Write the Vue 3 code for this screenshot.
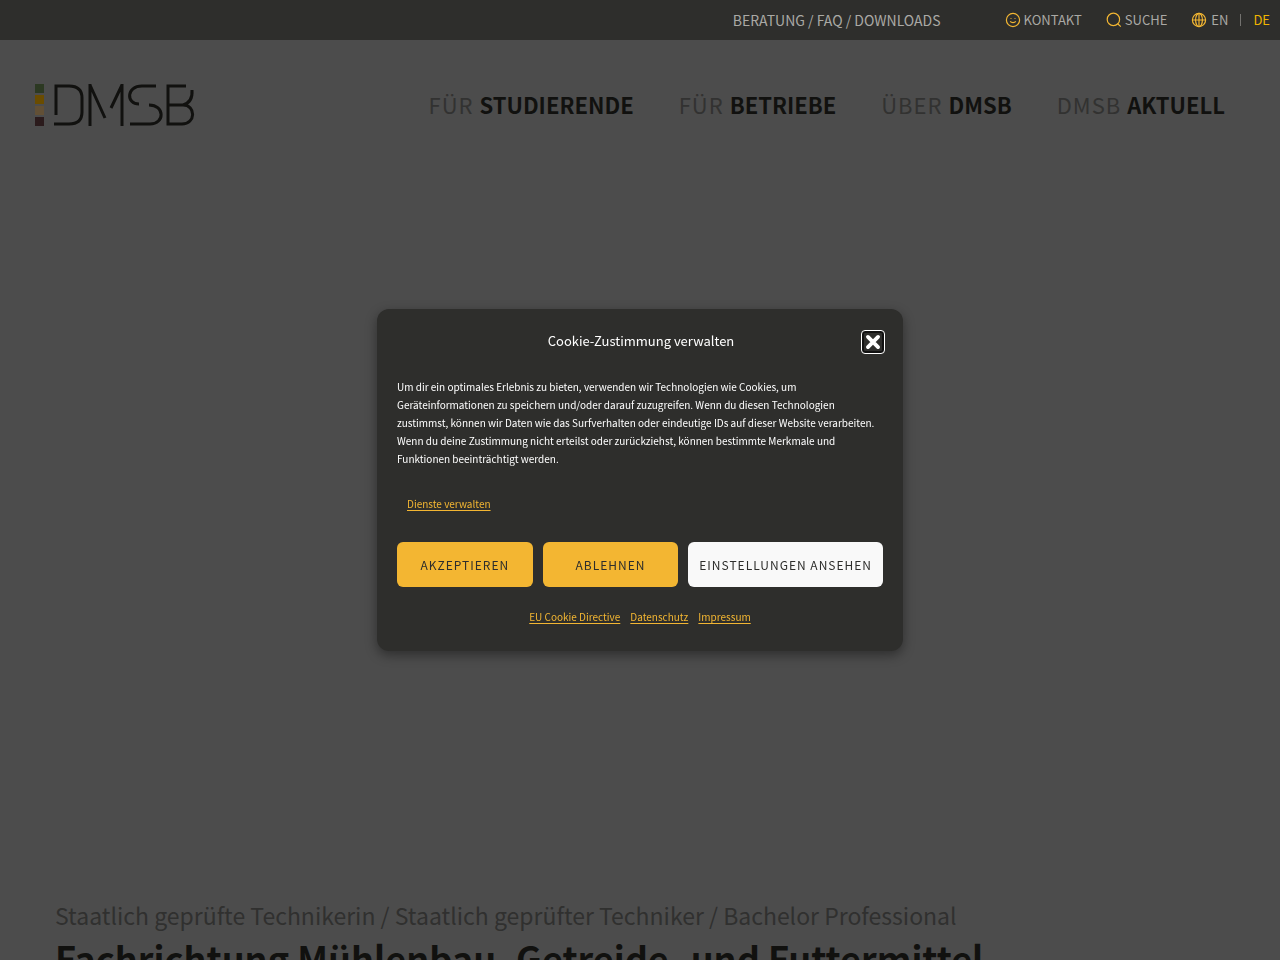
<!-- App.vue -->
<template>
  <div class="page">
    <div class="topbar">
      <a href="#" class="topbar-link">BERATUNG / FAQ / DOWNLOADS</a>
      <div class="topbar-tools">
        <a href="#" class="topbar-link">
          <svg class="icon" viewBox="0 0 16 16">
            <circle cx="8" cy="8" r="6.6" />
            <path d="M5.2 9.400c1.2 1.500 4.400 1.500 5.600 0M6 6v.8M10 6v.8" />
          </svg>
          KONTAKT
        </a>
        <a href="#" class="topbar-link">
          <svg class="icon" viewBox="0 0 16 16">
            <circle cx="7.4" cy="7.4" r="6.2" />
            <path d="M11.700 11.700L14.800 14.600" />
          </svg>
          SUCHE
        </a>
        <div class="languages">
          <svg class="icon globe" viewBox="0 0 16 16">
            <circle cx="8" cy="8" r="6.6" />
            <ellipse cx="8" cy="8" rx="3.4" ry="6.6" />
            <path d="M8 1.4v13.2M1.4 8h13.2" />
          </svg>
          <a href="#" class="topbar-link">EN</a>
          <span class="divider"></span>
          <a href="#" class="topbar-link active">DE</a>
        </div>
      </div>
    </div>

    <header class="header">
      <a href="#" aria-label="DMSB">
        <svg class="logo" viewBox="0 0 160 42">
          <rect x="0" y="0" width="9" height="9" fill="#2c3922" />
          <rect x="0" y="11" width="9" height="9" fill="#6a4c00" />
          <rect x="0" y="22" width="9" height="9" fill="#625036" />
          <rect x="0" y="33" width="9" height="9" fill="#2b1b1c" />
          <g fill="none" stroke="#11110f" stroke-width="3">
            <path d="M21 31V2H34Q47 2 47 14V28Q47 40 34 40H19" />
            <path d="M55 42V0M55 1L70 34M87 42V0M76 24L87 1" />
            <path d="M121 2H107C91 2 91 20 104 20M114 21C130 21 130 40 115 40H95" />
            <path d="M151 2H133V40H147C161 40 161 21 148 21H133M148 21Q158 18 157 6" />
          </g>
        </svg>
      </a>
      <nav class="nav">
        <a v-for="item in navItems" :key="item.strong" href="#">
          <span>{{ item.light }}</span>
          <strong>{{ item.strong }}</strong>
        </a>
      </nav>
    </header>

    <main class="hero">
      <p>Staatlich geprüfte Technikerin / Staatlich geprüfter Techniker / Bachelor Professional</p>
      <h1>Fachrichtung Mühlenbau, Getreide- und Futtermittel</h1>
    </main>

    <div class="overlay">
      <section class="cookie" role="dialog" aria-labelledby="cookie-title">
        <div class="cookie-head">
          <h2 id="cookie-title">Cookie-Zustimmung verwalten</h2>
          <button class="close" type="button" aria-label="Schließen">
            <svg viewBox="0 0 16 16"><path d="M3.500 3.500L12.500 12.500M12.500 3.500L3.500 12.500" /></svg>
          </button>
        </div>
        <p class="message">
          Um dir ein optimales Erlebnis zu bieten, verwenden wir Technologien wie Cookies, um
          Geräteinformationen zu speichern und/oder darauf zuzugreifen. Wenn du diesen Technologien
          zustimmst, können wir Daten wie das Surfverhalten oder eindeutige IDs auf dieser Website verarbeiten.
          Wenn du deine Zustimmung nicht erteilst oder zurückziehst, können bestimmte Merkmale und
          Funktionen beeinträchtigt werden.
        </p>
        <div class="manage"><a href="#">Dienste verwalten</a></div>
        <div class="buttons">
          <button type="button">AKZEPTIEREN</button>
          <button type="button">ABLEHNEN</button>
          <button type="button" class="settings">EINSTELLUNGEN ANSEHEN</button>
        </div>
        <div class="documents">
          <a v-for="doc in documents" :key="doc" href="#">{{ doc }}</a>
        </div>
      </section>
    </div>
  </div>
</template>

<script setup>
const navItems = [
  { light: 'FÜR', strong: 'STUDIERENDE' },
  { light: 'FÜR', strong: 'BETRIEBE' },
  { light: 'ÜBER', strong: 'DMSB' },
  { light: 'DMSB', strong: 'AKTUELL' },
];

const documents = ['EU Cookie Directive', 'Datenschutz', 'Impressum'];
</script>

<style>
body {
  margin: 0;
  background: #fff;
}
</style>

<style scoped>
.page {
  height: 100vh;
  overflow: hidden;
  font-family: "Noto Sans CJK SC", "Noto Sans", sans-serif;
  background: #4c4c4c;
}

.topbar {
  position: relative;
  z-index: 2; /* bleibt über dem Overlay */
  display: flex;
  align-items: center;
  justify-content: flex-end;
  gap: 64px;
  height: 40px;
  padding: 0 10px;
  background: #2e2e2c;
  font-size: 14px;
  line-height: 20px;
}

.topbar-tools {
  display: flex;
  gap: 24px;
  font-size: 13px;
}

.topbar-link {
  display: flex;
  align-items: center;
  gap: 3px;
  color: #aaa9a5;
  text-decoration: none;
}

.topbar-link.active {
  color: #f0b400;
}

.languages {
  display: flex;
  align-items: center;
}

.icon {
  width: 16px;
  height: 16px;
  fill: none;
  stroke: #f3b632;
  stroke-width: 1.2;
}

.globe {
  margin-right: 4px;
}

.divider {
  width: 1px;
  height: 12px;
  margin: 0 12px;
  background: #73726f;
}

.header {
  display: flex;
  align-items: center;
  justify-content: space-between;
  height: 130px;
  padding: 0 55px 0 35px;
}

.logo {
  display: block;
  width: 160px;
  height: 42px;
}

.nav {
  display: flex;
  gap: 45px;
  padding-bottom: 2px;
  font-size: 22px;
  line-height: 32px;
}

.nav a {
  display: flex;
  gap: 6px;
  color: #11110f;
  text-decoration: none;
  white-space: nowrap;
}

.nav span {
  color: #323231;
  letter-spacing: 1px;
}

.hero {
  padding: 729px 55px 0;
}

.hero p {
  margin: 0;
  color: #30302f;
  font-size: 23px;
  line-height: 32px;
}

.hero h1 {
  margin: 4px 0 0;
  color: #11110f;
  font-size: 36px;
  line-height: 44px;
  white-space: nowrap;
}

.overlay {
  position: fixed;
  inset: 0;
  z-index: 1;
  display: flex;
  align-items: center;
  justify-content: center;
}

.cookie {
  box-sizing: border-box;
  width: 526px;
  max-width: 100%;
  padding: 21px 20px 20px;
  border-radius: 12px;
  background: #2e2e2c;
  box-shadow: 0 4px 12px rgba(0, 0, 0, 0.4);
  color: #fff;
  font-size: 10px;
  line-height: 18px;
}

.cookie a {
  color: #f3b632;
  text-underline-offset: 2px;
}

.cookie-head {
  display: grid;
  grid-template-columns: 24px 1fr 24px;
  margin-right: -2px;
}

.cookie-head h2 {
  grid-column: 2;
  margin: 0;
  font-size: 13px;
  font-weight: 400;
  line-height: 22px;
  text-align: center;
}

.close {
  display: flex;
  align-items: center;
  justify-content: center;
  width: 24px;
  height: 24px;
  padding: 0;
  border: 1px solid #fff;
  border-radius: 4px;
  background: #2e2e2c;
  box-shadow: inset 0 0 0 2px #111;
}

.close svg {
  width: 18px;
  height: 18px;
  fill: none;
  stroke: #fff;
  stroke-width: 3.4;
  stroke-linecap: round;
}

.message {
  margin: 24px 0 0;
}

.manage {
  padding: 27px 10px 29px;
}

.buttons {
  display: flex;
  gap: 10px;
}

.buttons button {
  flex: 1 1 0;
  height: 45px;
  padding: 0 10px;
  border: 0;
  border-radius: 6px;
  background: #f3b632;
  color: #2e2e2c;
  font-family: inherit;
  font-size: 12px;
  letter-spacing: 1px;
  white-space: nowrap;
}

.buttons .settings {
  flex: 0 0 auto;
  padding: 0 11px;
  background: #f9f9f9;
}

.documents {
  display: flex;
  justify-content: center;
  gap: 10px;
  padding: 21px 0 5px;
}
</style>
